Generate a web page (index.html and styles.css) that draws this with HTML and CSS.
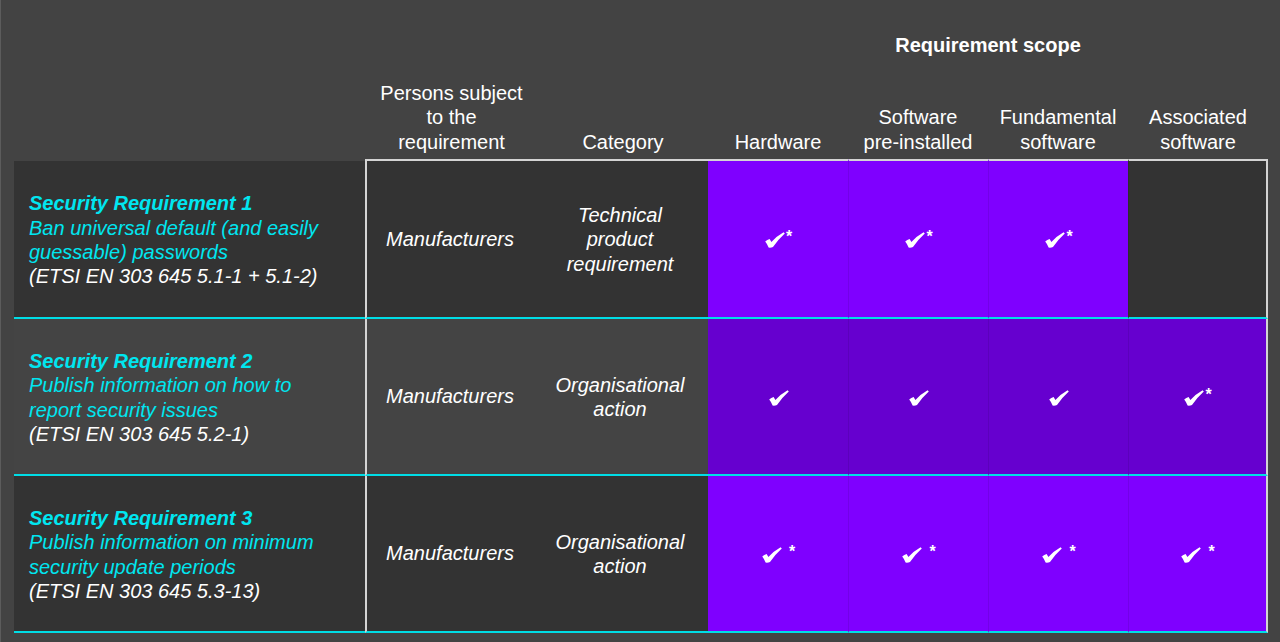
FILE: index.html
```html
<!DOCTYPE html>
<html lang="en">
<head>
<meta charset="utf-8">
<title>Security requirements scope</title>
<link rel="stylesheet" href="styles.css">
</head>
<body>
<div class="sheet">
  <div class="head">
    <div class="scope-title">Requirement scope</div>
    <div class="sub">Persons subject<br>to the<br>requirement</div>
    <div class="sub">Category</div>
    <div class="sub">Hardware</div>
    <div class="sub">Software<br>pre-installed</div>
    <div class="sub">Fundamental<br>software</div>
    <div class="sub">Associated<br>software</div>
  </div>

  <div class="row r1">
    <div class="cell label dark">
      <div class="ltext">
        <div class="req">Security Requirement 1</div>
        <div class="desc">Ban universal default (and easily<br>guessable) passwords</div>
        <div class="ref">(ETSI EN 303 645 5.1-1 + 5.1-2)</div>
      </div>
    </div>
    <div class="cell persons dark it">Manufacturers</div>
    <div class="cell cat dark it">Technical<br>product<br>requirement</div>
    <div class="cell scope violet"><span class="mark"><svg class="chk" viewBox="0 0 20 16" width="20" height="16"><path d="M0.2 9.6 Q2.2 7.6 4.6 7 L6.4 9.9 Q11.8 4 18.6 0.2 L19.8 1.5 Q13.2 7.4 8 15 Q5.8 16 3.6 15.6 Q2.2 12 0.2 9.6 Z"/></svg><span class="ast">*</span></span></div>
    <div class="cell scope violet"><span class="mark"><svg class="chk" viewBox="0 0 20 16" width="20" height="16"><path d="M0.2 9.6 Q2.2 7.6 4.6 7 L6.4 9.9 Q11.8 4 18.6 0.2 L19.8 1.5 Q13.2 7.4 8 15 Q5.8 16 3.6 15.6 Q2.2 12 0.2 9.6 Z"/></svg><span class="ast">*</span></span></div>
    <div class="cell scope violet"><span class="mark"><svg class="chk" viewBox="0 0 20 16" width="20" height="16"><path d="M0.2 9.6 Q2.2 7.6 4.6 7 L6.4 9.9 Q11.8 4 18.6 0.2 L19.8 1.5 Q13.2 7.4 8 15 Q5.8 16 3.6 15.6 Q2.2 12 0.2 9.6 Z"/></svg><span class="ast">*</span></span></div>
    <div class="cell scope last dark"></div>
  </div>

  <div class="row r2">
    <div class="cell label mid">
      <div class="ltext">
        <div class="req">Security Requirement 2</div>
        <div class="desc">Publish information on how to<br>report security issues</div>
        <div class="ref">(ETSI EN 303 645 5.2-1)</div>
      </div>
    </div>
    <div class="cell persons mid it">Manufacturers</div>
    <div class="cell cat mid it">Organisational<br>action</div>
    <div class="cell scope deep"><span class="mark"><svg class="chk" viewBox="0 0 20 16" width="20" height="16"><path d="M0.2 9.6 Q2.2 7.6 4.6 7 L6.4 9.9 Q11.8 4 18.6 0.2 L19.8 1.5 Q13.2 7.4 8 15 Q5.8 16 3.6 15.6 Q2.2 12 0.2 9.6 Z"/></svg></span></div>
    <div class="cell scope deep"><span class="mark"><svg class="chk" viewBox="0 0 20 16" width="20" height="16"><path d="M0.2 9.6 Q2.2 7.6 4.6 7 L6.4 9.9 Q11.8 4 18.6 0.2 L19.8 1.5 Q13.2 7.4 8 15 Q5.8 16 3.6 15.6 Q2.2 12 0.2 9.6 Z"/></svg></span></div>
    <div class="cell scope deep"><span class="mark"><svg class="chk" viewBox="0 0 20 16" width="20" height="16"><path d="M0.2 9.6 Q2.2 7.6 4.6 7 L6.4 9.9 Q11.8 4 18.6 0.2 L19.8 1.5 Q13.2 7.4 8 15 Q5.8 16 3.6 15.6 Q2.2 12 0.2 9.6 Z"/></svg></span></div>
    <div class="cell scope last deep"><span class="mark"><svg class="chk" viewBox="0 0 20 16" width="20" height="16"><path d="M0.2 9.6 Q2.2 7.6 4.6 7 L6.4 9.9 Q11.8 4 18.6 0.2 L19.8 1.5 Q13.2 7.4 8 15 Q5.8 16 3.6 15.6 Q2.2 12 0.2 9.6 Z"/></svg><span class="ast">*</span></span></div>
  </div>

  <div class="row r3">
    <div class="cell label dark">
      <div class="ltext">
        <div class="req">Security Requirement 3</div>
        <div class="desc">Publish information on minimum<br>security update periods</div>
        <div class="ref">(ETSI EN 303 645 5.3-13)</div>
      </div>
    </div>
    <div class="cell persons dark it">Manufacturers</div>
    <div class="cell cat dark it">Organisational<br>action</div>
    <div class="cell scope violet"><span class="mark spaced"><svg class="chk" viewBox="0 0 20 16" width="20" height="16"><path d="M0.2 9.6 Q2.2 7.6 4.6 7 L6.4 9.9 Q11.8 4 18.6 0.2 L19.8 1.5 Q13.2 7.4 8 15 Q5.8 16 3.6 15.6 Q2.2 12 0.2 9.6 Z"/></svg><span class="ast">*</span></span></div>
    <div class="cell scope violet"><span class="mark spaced"><svg class="chk" viewBox="0 0 20 16" width="20" height="16"><path d="M0.2 9.6 Q2.2 7.6 4.6 7 L6.4 9.9 Q11.8 4 18.6 0.2 L19.8 1.5 Q13.2 7.4 8 15 Q5.8 16 3.6 15.6 Q2.2 12 0.2 9.6 Z"/></svg><span class="ast">*</span></span></div>
    <div class="cell scope violet"><span class="mark spaced"><svg class="chk" viewBox="0 0 20 16" width="20" height="16"><path d="M0.2 9.6 Q2.2 7.6 4.6 7 L6.4 9.9 Q11.8 4 18.6 0.2 L19.8 1.5 Q13.2 7.4 8 15 Q5.8 16 3.6 15.6 Q2.2 12 0.2 9.6 Z"/></svg><span class="ast">*</span></span></div>
    <div class="cell scope last violet"><span class="mark spaced"><svg class="chk" viewBox="0 0 20 16" width="20" height="16"><path d="M0.2 9.6 Q2.2 7.6 4.6 7 L6.4 9.9 Q11.8 4 18.6 0.2 L19.8 1.5 Q13.2 7.4 8 15 Q5.8 16 3.6 15.6 Q2.2 12 0.2 9.6 Z"/></svg><span class="ast">*</span></span></div>
  </div>
</div>
</body>
</html>
```

FILE: styles.css
```css
* { box-sizing: border-box; }

html, body {
  margin: 0;
  padding: 0;
  background: #434343;
}

body {
  width: 1280px;
  height: 642px;
  overflow: hidden;
  border-left: 1px solid #5c5c5c;
  font-family: "Liberation Sans", Arial, sans-serif;
  font-size: 20px;
  line-height: 24.4px;
  color: #ffffff;
}

.sheet {
  padding-left: 13px;
}

.head,
.row {
  display: grid;
  grid-template-columns: 351px 173px 170px 140px 140px 140px 140px;
}

.head {
  grid-template-rows: 70px 89px;
}

.scope-title {
  grid-column: 4 / 8;
  grid-row: 1;
  padding-top: 33px;
  text-align: center;
  font-weight: bold;
}

.sub {
  grid-row: 2;
  align-self: end;
  padding-bottom: 5px;
  text-align: center;
}

.sub:nth-child(2) { grid-column: 2; }
.sub:nth-child(3) { grid-column: 3; }
.sub:nth-child(4) { grid-column: 4; }
.sub:nth-child(5) { grid-column: 5; }
.sub:nth-child(6) { grid-column: 6; }
.sub:nth-child(7) { grid-column: 7; }

.r1 { grid-template-rows: 160px; }
.r2, .r3 { grid-template-rows: 157px; }

.cell {
  display: flex;
  align-items: center;
  justify-content: center;
  text-align: center;
  border-bottom: 2px solid #00dde6;
}

.r1 .cell {
  border-top: 2px solid #d4d4d4;
}

.r1 .label {
  border-top-color: transparent;
  background-clip: padding-box;
}

.dark { background-color: #333333; }
.mid { background-color: #444444; }
.violet { background-color: #7f00ff; }
.deep { background-color: #6600cf; }

.it { font-style: italic; }

.label {
  justify-content: flex-start;
  text-align: left;
  padding-left: 15px;
  padding-top: 2px;
}

.ltext { font-style: italic; }

.req {
  color: #00e6f0;
  font-weight: bold;
}

.desc { color: #00e6f0; }
.ref { color: #ffffff; }

.persons {
  border-left: 2px solid #d4d4d4;
  padding-right: 5px;
}

.cat {
  padding-right: 6px;
  padding-top: 1px;
}

.scope + .scope {
  border-left: 1px solid rgba(0, 0, 0, 0.09);
}

.last {
  border-right: 2px solid #d4d4d4;
}

.mark {
  display: inline-flex;
  align-items: flex-start;
  margin-left: 1px;
  margin-top: 2px;
}

.chk {
  display: block;
  fill: #ffffff;
}

.ast {
  font-weight: bold;
  font-size: 16px;
  line-height: 14px;
  margin-left: 1px;
  margin-top: -2px;
}

.spaced .ast {
  margin-left: 7px;
}
```
